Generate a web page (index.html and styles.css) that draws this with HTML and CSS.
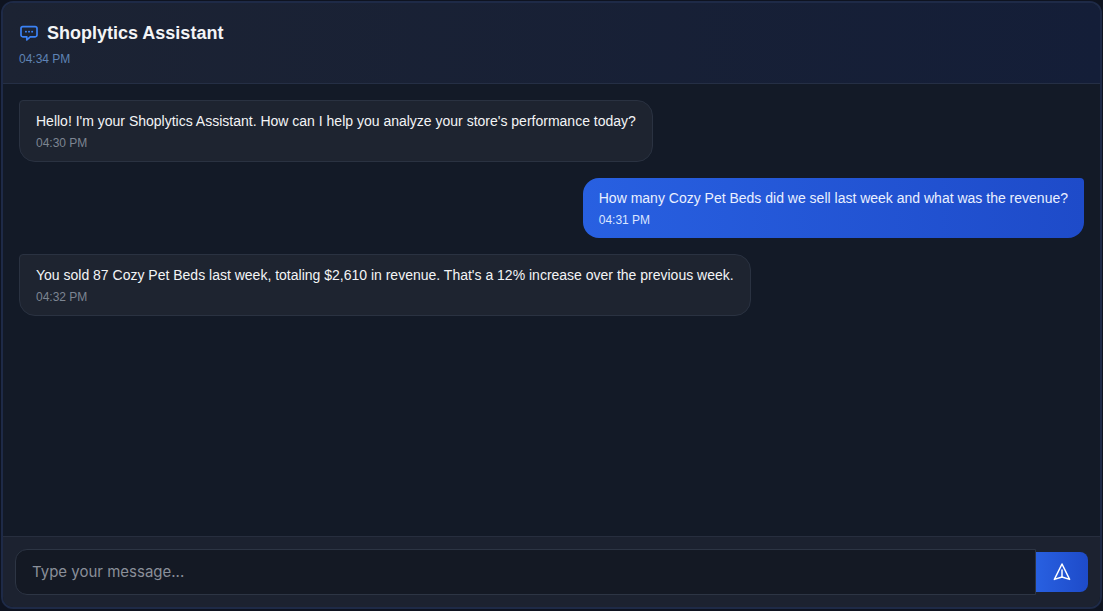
FILE: index.html
```html
<!DOCTYPE html>
<html lang="en">
<head>
<meta charset="utf-8">
<title>Shoplytics Assistant</title>
<link rel="stylesheet" href="styles.css">
</head>
<body>
<div class="chat">
  <header class="head">
    <div class="title-row">
      <svg class="chat-icon" width="20" height="20" viewBox="0 0 20 20" fill="none" stroke="#3b82f6" stroke-width="1.7" stroke-linejoin="round" stroke-linecap="round">
        <path d="M3.8 3.600h12.400a1.800 1.800 0 0 1 1.800 1.800v6.600a1.800 1.800 0 0 1-1.800 1.800h-5l-3.400 3.100v-3.100H3.800A1.800 1.800 0 0 1 2 12V5.400a1.800 1.800 0 0 1 1.800-1.800z"/>
        <path d="M6.800 8.700h.3M9.900 8.700h.3M13 8.700h.3"/>
      </svg>
      <h1>Shoplytics Assistant</h1>
    </div>
    <div class="head-time">04:34 PM</div>
  </header>
  <main class="messages">
    <div class="msg bot">
      <p>Hello! I'm your Shoplytics Assistant. How can I help you analyze your store's performance today?</p>
      <time>04:30 PM</time>
    </div>
    <div class="msg user">
      <p>How many Cozy Pet Beds did we sell last week and what was the revenue?</p>
      <time>04:31 PM</time>
    </div>
    <div class="msg bot">
      <p>You sold 87 Cozy Pet Beds last week, totaling $2,610 in revenue. That's a 12% increase over the previous week.</p>
      <time>04:32 PM</time>
    </div>
  </main>
  <footer class="composer">
    <input class="field" type="text" placeholder="Type your message...">
    <button class="send" type="button" aria-label="Send">
      <svg width="20" height="20" viewBox="0 0 20 20" fill="none" stroke="#fff" stroke-width="1.500" stroke-linejoin="round" stroke-linecap="round">
        <path d="M10 2 17.600 17.400 10 15 2.400 17.400z"/>
        <path d="M10 8v7"/>
      </svg>
    </button>
  </footer>
</div>
</body>
</html>
```
FILE: styles.css
```css
* { box-sizing: border-box; }
html, body { height: 100%; }
body {
  margin: 0;
  padding: 1px;
  background: #0e1320;
  font-family: "Liberation Sans", Arial, sans-serif;
  color: #fff;
}
.chat {
  width: 1101px;
  height: 608px;
  display: flex;
  flex-direction: column;
  border: 2px solid #1e2a47;
  border-radius: 12px;
  overflow: hidden;
  background: #131a27;
}
.chat > * { flex-shrink: 0; }
.head {
  height: 81px;
  padding: 17px 16px 0;
  background: linear-gradient(90deg, #1c2333 0%, #141e38 100%);
  border-bottom: 1px solid #252f45;
}
.title-row {
  display: flex;
  align-items: center;
  gap: 8px;
  height: 26px;
}
.chat-icon { flex: none; }
h1 {
  margin: 0;
  font-size: 18px;
  font-weight: 700;
  color: #f3f4f6;
  line-height: 26px;
}
.head-time {
  margin-top: 5px;
  font-size: 12px;
  line-height: 16px;
  color: #5f83b5;
}
.messages {
  flex: 1 1 0;
  min-height: 0;
  padding: 16px;
  display: flex;
  flex-direction: column;
  gap: 16px;
  align-items: flex-start;
}
.msg {
  padding: 10px 16px;
  border-radius: 16px;
}
.msg p {
  margin: 0;
  font-size: 14px;
  line-height: 20px;
}
.msg time {
  display: block;
  margin-top: 4px;
  font-size: 12px;
  line-height: 16px;
}
.bot {
  background: #1e2430;
  border: 1px solid #2a3241;
  border-top-left-radius: 4px;
  color: #f3f4f6;
}
.bot time { color: #7d8592; }
.user {
  align-self: flex-end;
  background: linear-gradient(90deg, #2860e1 0%, #1e4bc9 100%);
  border-top-right-radius: 4px;
  color: #eaf0ff;
}
.user time { color: #dbe6ff; }
.composer {
  height: 71px;
  padding: 12px;
  display: flex;
  align-items: center;
  background: #1c2230;
  border-top: 1px solid #272e3e;
}
.field {
  flex: 1 1 0;
  min-width: 0;
  height: 46px;
  padding: 0 16px 2px;
  background: #141924;
  border: 1px solid #2d3544;
  border-radius: 12px 0 0 12px;
  color: #fff;
  font-family: Inter, "Liberation Sans", sans-serif;
  font-size: 15px;
  outline: none;
}
.field::placeholder { color: #8a8f99; opacity: 1; }
.send {
  flex: none;
  width: 52px;
  height: 40px;
  padding: 0;
  border: 0;
  border-radius: 0 8px 8px 0;
  background: linear-gradient(90deg, #2860e1 0%, #1e4bc9 100%);
  display: flex;
  align-items: center;
  justify-content: center;
}
```
